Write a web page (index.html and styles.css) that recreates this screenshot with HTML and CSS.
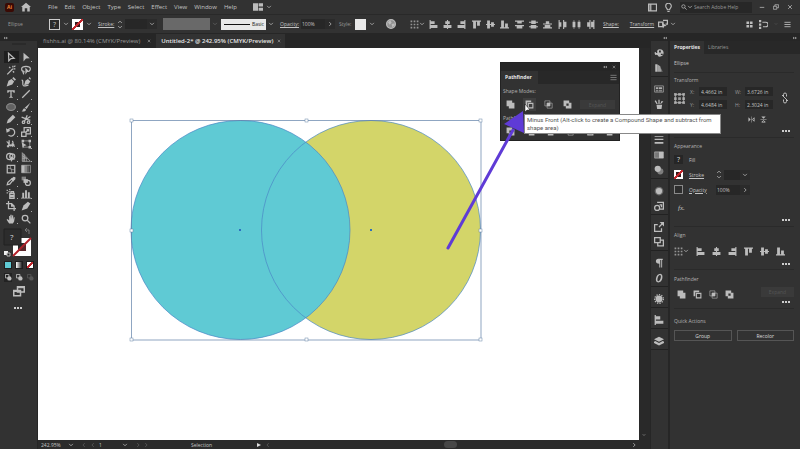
FILE: index.html
```
<!DOCTYPE html>
<html lang="en">

<head>
  <meta charset="UTF-8">
  <meta name="viewport" content="width=device-width, initial-scale=1.0">
  <title>Untitled-2 - Illustrator</title>
  <link rel="stylesheet" href="styles.css">
</head>

<body>
  <!-- icon sprite -->
  <svg class="sprite" aria-hidden="true">
    <symbol id="i-down" viewBox="0 0 16 16"><path class="line" d="M3 5l5 5 5-5"/></symbol>
    <symbol id="i-right" viewBox="0 0 16 16"><path class="line" d="M6 3l5 5-5 5"/></symbol>
    <symbol id="i-left" viewBox="0 0 16 16"><path class="line" d="M10 3L5 8l5 5"/></symbol>
    <symbol id="i-step" viewBox="0 0 16 24"><path class="line" d="M3 8l5-5 5 5M3 16l5 5 5-5"/></symbol>
    <symbol id="i-collapse" viewBox="0 0 16 16"><path d="M7 3v10L1 8zM15 3v10L9 8z"/></symbol>
    <symbol id="i-expand" viewBox="0 0 16 16"><path d="M1 3v10l6-5zM9 3v10l6-5z"/></symbol>
    <symbol id="i-x" viewBox="0 0 16 16"><path class="line" d="M3 3l10 10M13 3L3 13"/></symbol>
    <symbol id="i-min" viewBox="0 0 16 16"><path class="line" d="M2 9h12"/></symbol>
    <symbol id="i-restore" viewBox="0 0 16 16"><path class="line" d="M1 6h9v8H1zM5 6V2h10v8h-5"/></symbol>
    <symbol id="i-home" viewBox="0 0 16 16"><path d="M8 1L0 8h2v7h4v-5h4v5h4V8h2z"/></symbol>
    <symbol id="i-arrange" viewBox="0 0 16 16"><path d="M0 2h8v12H0zM9 2h7v5H9zM9 9h7v5H9z"/></symbol>
    <symbol id="i-frame" viewBox="0 0 16 16"><path class="line" d="M1 2h14v12H1zM5 2v12"/><path d="M1 2h4v12H1z" opacity=".5"/></symbol>
    <symbol id="i-bulb" viewBox="0 0 16 16"><path class="line" d="M6 12c0-3-3-3-3-6.500a5 5 0 0 1 10 0C13 9 10 9 10 12zM6 15h4"/></symbol>
    <symbol id="i-search" viewBox="0 0 16 16"><circle class="line" cx="6.500" cy="6.500" r="4.500"/><path class="line" d="M10 10l5 5"/></symbol>
    <symbol id="i-globe" viewBox="0 0 16 16"><circle cx="8" cy="8" r="7" opacity=".7"/><circle class="line" cx="8" cy="8" r="7"/><path d="M3 5l4-3 2 4-3 3zM9 8l4-1 1 3-4 3z"/></symbol>
    <symbol id="i-dots" viewBox="0 0 16 16"><path d="M1 1h3v3H1zM6.500 1h3v3h-3zM12 1h3v3h-3zM1 6.500h3v3H1zM6.500 6.500h3v3h-3zM12 6.500h3v3h-3zM1 12h3v3H1zM6.500 12h3v3h-3zM12 12h3v3h-3z" opacity=".7"/></symbol>
    <symbol id="i-al" viewBox="0 0 16 16"><path d="M1 0h2v16H1zM3 2h7v5H3zM3 9h12v5H3z"/></symbol>
    <symbol id="i-ac" viewBox="0 0 16 16"><path d="M7 0h2v16H7zM4 2h8v5H4zM1 9h14v5H1z"/></symbol>
    <symbol id="i-ar" viewBox="0 0 16 16"><path d="M13 0h2v16h-2zM6 2h7v5H6zM1 9h12v5H1z"/></symbol>
    <symbol id="i-at" viewBox="0 0 16 16"><path d="M0 1h16v2H0zM2 3h5v12H2zM9 3h5v7H9z"/></symbol>
    <symbol id="i-am" viewBox="0 0 16 16"><path d="M0 7h16v2H0zM2 1h5v14H2zM9 4h5v8H9z"/></symbol>
    <symbol id="i-ab" viewBox="0 0 16 16"><path d="M0 13h16v2H0zM2 1h5v12H2zM9 6h5v7H9z"/></symbol>
    <symbol id="i-dt" viewBox="0 0 16 16"><path d="M0 1h16v2H0zM4 3h8v3H4zM0 9h16v2H0zM3 11h10v4H3z"/></symbol>
    <symbol id="i-dm" viewBox="0 0 16 16"><path d="M0 3h16v2H0zM4 1h8v6H4zM0 11h16v2H0zM3 9h10v6H3z"/></symbol>
    <symbol id="i-db" viewBox="0 0 16 16"><path d="M0 6h16v2H0zM5 2h6v4H5zM0 13h16v2H0zM3 9h10v4H3z"/></symbol>
    <symbol id="i-dl" viewBox="0 0 16 16"><path d="M1 0h2v16H1zM3 4h3v8H3zM9 0h2v16H9zM11 3h4v10h-4z"/></symbol>
    <symbol id="i-dc" viewBox="0 0 16 16"><path d="M3 0h1v16H3zM1 3h5v10H1zM12 0h1v16h-1zM10 3h5v10h-5z"/></symbol>
    <symbol id="i-dr" viewBox="0 0 16 16"><path d="M6 0h2v16H6zM2 4h4v8H2zM13 0h2v16h-2zM9 3h4v10H9z"/></symbol>
    <symbol id="i-isolate" viewBox="0 0 16 16"><path class="line" d="M1 5h7v7H1zM8 2h7v6h-3"/><path d="M6 5l8 6-4 .5L8 15z"/></symbol>
    <symbol id="i-four" viewBox="0 0 16 16"><path d="M1 1h6v6H1zM9 1h6v6H9zM1 9h6v6H1zM9 9h6v6H9z"/></symbol>
    <symbol id="i-snap" viewBox="0 0 16 16"><path d="M0 0h4v4H0zM0 6h4v4H0zM0 12h4v4H0z"/><path class="line" d="M6 4h6a3 3 0 0 1 0 8H7"/></symbol>
    <symbol id="i-menu" viewBox="0 0 16 16"><path class="line" d="M1 3h14M1 8h14M1 13h14"/></symbol>

    <symbol id="t-select" viewBox="0 0 16 16"><path class="line" d="M4 2l9 8-5 .5L4.500 14z"/></symbol>
    <symbol id="t-direct" viewBox="0 0 16 16"><path d="M4 1l10 9-6 .5L4 15z"/></symbol>
    <symbol id="t-wand" viewBox="0 0 16 16"><path class="line" d="M2 15L11 6M11 1v3M15 6h-3M5 3l2 2M13 12l-2-2M15 1l-2 2"/></symbol>
    <symbol id="t-lasso" viewBox="0 0 16 16"><path class="line" d="M6 11C2 11 1 8 1 6c1-5 13-5 14 0 0 2-1 3-2 4M4 9c-3 2 1 4 0 6"/><path d="M7 4l7 7-4 0-3 4z"/></symbol>
    <symbol id="t-pen" viewBox="0 0 16 16"><path d="M1 15L4 6l5-3 4 4-3 5zM10 2l2-2 4 4-2 2z"/></symbol>
    <symbol id="t-curve" viewBox="0 0 16 16"><path d="M5 13l2-7 4-3 4 4-3 4zM12 2l2-2 2 3-1 1z"/><path class="line" d="M1 5c4 0 0 8 3 9s5-1 8-1"/></symbol>
    <symbol id="t-type" viewBox="0 0 16 16"><path d="M2 2h12v4h-2c0-2-1-2-3-2v8l2 1v1H5v-1l2-1V4C5 4 4 4 4 6H2z"/></symbol>
    <symbol id="t-line" viewBox="0 0 16 16"><path class="line" d="M2 14L14 2"/></symbol>
    <symbol id="t-ellipse" viewBox="0 0 16 16"><ellipse cx="8" cy="8" rx="7" ry="5.500" opacity=".35"/><ellipse class="line thin" cx="8" cy="8" rx="7" ry="5.500"/></symbol>
    <symbol id="t-brush" viewBox="0 0 16 16"><path d="M15 1L9 11 6 9zM5 10l3 2c0 3-4 4-7 3 2-1 2-4 4-5z"/></symbol>
    <symbol id="t-pencil" viewBox="0 0 16 16"><path d="M1 15l2-6 8-8 4 4-8 8z"/></symbol>
    <symbol id="t-cut" viewBox="0 0 16 16"><path class="line" d="M1 5l10 4M5 13l5-11M11 9l4 1M6 10l9-6"/><circle class="line" cx="4" cy="13" r="2"/><circle class="line" cx="12" cy="13" r="2"/></symbol>
    <symbol id="t-rotate" viewBox="0 0 16 16"><path class="line" d="M3 5a6 6 0 1 1 1 8"/><path d="M0 2l1 7 6-3z"/></symbol>
    <symbol id="t-scale" viewBox="0 0 16 16"><path class="line" d="M1 8h7v7H1zM5 8V1h10v10H8M8 8l4-4M9 4h3v3"/></symbol>
    <symbol id="t-width" viewBox="0 0 16 16"><path class="line" d="M1 4c4 1 3 8 7 7s4-6 2-8M2 13c3-4 8-5 12-1M5 2v6"/><path d="M1 11l4-3v6zM9 6l5 3-4 4z"/></symbol>
    <symbol id="t-free" viewBox="0 0 16 16"><path class="line thin" d="M3 3h11v10H3z"/><path d="M1 1h4v4H1zM12 1h4v4h-4zM12 11h4v4h-4zM1 5l8 5-4 1-2 4z"/></symbol>
    <symbol id="t-shape" viewBox="0 0 16 16"><circle class="line" cx="6" cy="7" r="5"/><circle class="line" cx="10" cy="7" r="4"/><path d="M7 6l8 6-4 0-3 4z"/></symbol>
    <symbol id="t-persp" viewBox="0 0 16 16"><path class="line thin" d="M2 1v14h13zM2 6l7 4v5M2 10h8M5 3v12"/><path d="M2 1l5 5v9H2z" opacity=".4"/></symbol>
    <symbol id="t-mesh" viewBox="0 0 16 16"><path class="line" d="M2 2h12v12H2z"/><path class="line thin" d="M2 8c4-4 8 4 12 0M8 2c-4 4 4 8 0 12"/></symbol>
    <symbol id="t-grad" viewBox="0 0 16 16"><path class="line thin" d="M1 2h14v12H1z"/><path d="M1 2h5v12H1z"/><path d="M6 2h4v12H6z" opacity=".6"/><path d="M10 2h3v12h-3z" opacity=".3"/></symbol>
    <symbol id="t-drop" viewBox="0 0 16 16"><path class="line" d="M2 14l1-4 6-5 2 2-5 6z"/><path d="M8 4l2-1 2-2 3 1 0 3-2 2-1 2z"/></symbol>
    <symbol id="t-blend" viewBox="0 0 16 16"><path d="M1 1h7v6H1z" opacity=".6"/><path d="M4 5h7v6H4z"/><circle class="line" cx="11" cy="11" r="4"/></symbol>
    <symbol id="t-spray" viewBox="0 0 16 16"><path class="line" d="M6 7h7v8H6zM8 7V4h4v3M8 10h3v2H8z"/><path d="M1 1h2v2H1zM4 3h2v2H4zM1 5h2v2H1zM5 0h2v2H5z"/></symbol>
    <symbol id="t-graph" viewBox="0 0 16 16"><path d="M2 6h3v8H2zM6.500 2h3v12h-3zM11 5h3v9h-3zM0 14h16v1H0z"/></symbol>
    <symbol id="t-artboard" viewBox="0 0 16 16"><path class="line" d="M4 0v12h12M0 4h9l4 4v8M9 4v4h4"/></symbol>
    <symbol id="t-slice" viewBox="0 0 16 16"><path d="M1 15l3-8 7-6 4 3-5 8z"/></symbol>
    <symbol id="t-hand" viewBox="0 0 16 16"><path d="M5 15L1 9l1-1 3 2V3h1.500v5l.5-7h2v7l1-6h1.500v7l1-4H14l-1 7-2 3z"/></symbol>
    <symbol id="t-edit" viewBox="0 0 16 16"><path class="line" d="M1 1h8v8H1z"/><circle cx="10" cy="10" r="5"/></symbol>
    <symbol id="t-screen" viewBox="0 0 16 16"><path class="line" d="M6 1h9v7H6zM1 6h9v7H1z"/><path d="M6 1h9v2H6zM1 6h9v2H1z"/></symbol>

    <symbol id="d-color" viewBox="0 0 16 16"><path fill-rule="evenodd" d="M9 2c9 0 8 12 0 12-3 0-2-3-4-3s-4 0-4-3c0-2 1-2 2-1 1 2 3 1 2-1 0-2 1-4 4-4zM8 4h3v3H8zM11 9h3v2h-3z"/></symbol>
    <symbol id="d-guide" viewBox="0 0 16 16"><path d="M2 2h3v12H2z"/><path d="M5 2l5 3 2 9H5z" opacity=".8"/><path d="M10 6l4 8h-2z" opacity=".5"/></symbol>
    <symbol id="d-swatch" viewBox="0 0 16 16"><path class="line thin" d="M1 3h14v10H1z"/><path d="M3 5h4v3H3zM8 5h5v3H8z" opacity=".9"/><path d="M3 9h4v3H3zM8 9h5v3H8z" opacity=".6"/></symbol>
    <symbol id="d-brush" viewBox="0 0 16 16"><path d="M4 9h9l-1 7H5zM7 1h2v7H7zM1 3l2-1 3 6H4zM12 3l3 1-4 4h-1z"/></symbol>
    <symbol id="d-club" viewBox="0 0 16 16"><path d="M8 1a3 3 0 0 1 3 5 3 3 0 1 1-2 5l1 4H6l1-4a3 3 0 1 1-2-5 3 3 0 0 1 3-5z"/></symbol>
    <symbol id="d-stroke" viewBox="0 0 16 16"><path d="M1 2h14v1H1zM1 6h14v2H1zM1 11h14v3H1z"/></symbol>
    <symbol id="d-grad" viewBox="0 0 16 16"><path class="line thin" d="M1 3h14v10H1z"/><path d="M1 3h7v10H1z" opacity=".5"/><path d="M8 3h7v10H8z"/></symbol>
    <symbol id="d-trans" viewBox="0 0 16 16"><circle cx="6" cy="6" r="5"/><circle cx="10" cy="10" r="5" opacity=".55"/></symbol>
    <symbol id="d-sun" viewBox="0 0 16 16"><circle cx="8" cy="8" r="5"/><circle cx="8" cy="8" r="7" opacity=".4"/></symbol>
    <symbol id="d-style" viewBox="0 0 16 16"><path class="line" d="M5 2h10v11H9M9 6h3v4"/><circle class="line" cx="5" cy="11" r="4"/></symbol>
    <symbol id="d-export" viewBox="0 0 16 16"><path class="line" d="M6 4H1v11h11v-5M8 8l6-6"/><path d="M9 0h7v7z"/></symbol>
    <symbol id="d-layers2" viewBox="0 0 16 16"><path class="line" d="M1 1h9v8H1zM10 5h5v9H6V9"/></symbol>
    <symbol id="d-para" viewBox="0 0 16 16"><path d="M7 1h7v2h-1v12h-1.500V3H10v12H8.500V9C1 9 2 1 7 1z"/></symbol>
    <symbol id="d-o" viewBox="0 0 16 16"><path fill-rule="evenodd" d="M10 1c6 0 4 14-3 14C0 15 3 1 10 1zM9.500 3C6 3 4 13 7 13s6-10 2.500-10z"/></symbol>
    <symbol id="d-wheel" viewBox="0 0 16 16"><circle cx="8" cy="8" r="5.500"/><circle class="line dash" cx="8" cy="8" r="7"/></symbol>
    <symbol id="d-stack" viewBox="0 0 16 16"><path d="M8 1l8 4-8 4-8-4zM0 9l2-1 6 3 6-3 2 1v2l-8 4-8-4z"/></symbol>

    <symbol id="p-unite" viewBox="0 0 16 16"><path d="M1 1h10v4h4v10H5v-4H1z"/></symbol>
    <symbol id="p-minus" viewBox="0 0 16 16"><path d="M1 1h10v3H4v7H1z"/><path class="line" d="M6 6h8v8H6z"/></symbol>
    <symbol id="p-inter" viewBox="0 0 16 16"><path class="line thin" d="M1.500 1.500h9v9h-9zM5.500 5.500h9v9h-9z"/><path d="M5 5h6v6H5z"/></symbol>
    <symbol id="p-excl" viewBox="0 0 16 16"><path fill-rule="evenodd" d="M1 1h10v4h4v10H5v-4H1zM6 6v4h4V6z"/></symbol>
    <symbol id="p-flat" viewBox="0 0 16 16"><path class="line" d="M2 2h9v9H2zM5 5h9v9H5z"/></symbol>
    <symbol id="p-flipx" viewBox="0 0 16 16"><path d="M1 3v10l5-5zM7.500 1h1v14h-1z"/><path class="line" d="M14 4v8l-4-4z"/></symbol>
    <symbol id="p-flipy" viewBox="0 0 16 16"><path d="M3 1h10L8 6zM1 7.500h14v1H1z"/><path class="line" d="M4 14h8l-4-4z"/></symbol>
    <symbol id="p-link" viewBox="0 0 16 24"><path class="line" d="M5 9V5a3 3 0 0 1 6 0v4M5 15v4a3 3 0 0 0 6 0v-4M2 6l12 12"/></symbol>
    <symbol id="p-ref" viewBox="0 0 16 16"><path class="line thin" d="M2 2h12v12H2z"/><path d="M0 0h4v4H0zM6 0h4v4H6zM12 0h4v4h-4zM0 6h4v4H0zM6 6h4v4H6zM12 6h4v4h-4zM0 12h4v4H0zM6 12h4v4H6zM12 12h4v4h-4z" opacity=".75"/></symbol>
  </svg>

  <header class="menubar">
    <span class="logo">Ai</span>
    <button class="home" aria-label="Home"><svg class="icon"><use href="#i-home"/></svg></button>
    <nav class="menus">
      <a href="#">File</a>
      <a href="#">Edit</a>
      <a href="#">Object</a>
      <a href="#">Type</a>
      <a href="#">Select</a>
      <a href="#">Effect</a>
      <a href="#">View</a>
      <a href="#">Window</a>
      <a href="#">Help</a>
    </nav>
    <button class="arrange" aria-label="Arrange documents">
      <svg class="icon"><use href="#i-arrange"/></svg>
      <svg class="chev"><use href="#i-down"/></svg>
    </button>
    <div class="menubar-right">
      <button aria-label="Workspace"><svg class="icon small"><use href="#i-frame"/></svg></button>
      <button aria-label="Learn"><svg class="icon small"><use href="#i-bulb"/></svg></button>
      <div class="search">
        <svg class="chev"><use href="#i-search"/></svg>
        <svg class="chev"><use href="#i-down"/></svg>
        <input type="text" aria-label="Search" placeholder="Search Adobe Help">
      </div>
      <div class="window-buttons">
        <button aria-label="Minimize"><svg class="chev"><use href="#i-min"/></svg></button>
        <button aria-label="Restore"><svg class="chev"><use href="#i-restore"/></svg></button>
        <button aria-label="Close"><svg class="chev"><use href="#i-x"/></svg></button>
      </div>
    </div>
  </header>

  <div class="controlbar">
    <span class="object-type">Ellipse</span>
    <button class="picker" aria-label="Fill"><span class="swatch unknown">?</span><svg class="chev"><use href="#i-down"/></svg></button>
    <button class="picker" aria-label="Stroke color"><span class="swatch none"></span><svg class="chev"><use href="#i-down"/></svg></button>
    <label class="under stroke-label" for="strokeWeight">Stroke:</label>
    <svg class="stepper"><use href="#i-step"/></svg>
    <input class="field weight" id="strokeWeight" type="text">
    <button class="drop" aria-label="Stroke weights"><svg class="chev"><use href="#i-down"/></svg></button>
    <button class="profile" aria-label="Width profile"><span class="profile-box"></span><svg class="chev dim"><use href="#i-down"/></svg></button>
    <button class="brush"><span class="brush-box"><span class="brush-line"></span>Basic</span><svg class="chev"><use href="#i-down"/></svg></button>
    <label class="under opacity-label" for="opacity">Opacity:</label>
    <input class="field percent" id="opacity" type="text" value="100%">
    <button class="drop" aria-label="Opacity slider"><svg class="chev"><use href="#i-right"/></svg></button>
    <span class="style-label">Style:</span>
    <button class="picker" aria-label="Graphic style"><span class="swatch white"></span><svg class="chev"><use href="#i-down"/></svg></button>
    <button class="recolor" aria-label="Recolor artwork"><svg class="icon"><use href="#i-globe"/></svg></button>
    <button class="align-to" aria-label="Align to"><svg class="icon small"><use href="#i-dots"/></svg><svg class="chev"><use href="#i-down"/></svg></button>
    <div class="align-buttons">
      <button aria-label="Align left"><svg class="icon small"><use href="#i-al"/></svg></button>
      <button aria-label="Align center"><svg class="icon small"><use href="#i-ac"/></svg></button>
      <button aria-label="Align right"><svg class="icon small"><use href="#i-ar"/></svg></button>
    </div>
    <div class="align-buttons">
      <button aria-label="Align top"><svg class="icon small"><use href="#i-at"/></svg></button>
      <button aria-label="Align middle"><svg class="icon small"><use href="#i-am"/></svg></button>
      <button aria-label="Align bottom"><svg class="icon small"><use href="#i-ab"/></svg></button>
    </div>
    <div class="align-buttons">
      <button aria-label="Distribute top"><svg class="icon small"><use href="#i-dt"/></svg></button>
      <button aria-label="Distribute middle"><svg class="icon small"><use href="#i-dm"/></svg></button>
      <button aria-label="Distribute bottom"><svg class="icon small"><use href="#i-db"/></svg></button>
    </div>
    <div class="align-buttons">
      <button aria-label="Distribute left"><svg class="icon small"><use href="#i-dl"/></svg></button>
      <button aria-label="Distribute center"><svg class="icon small"><use href="#i-dc"/></svg></button>
      <button aria-label="Distribute right"><svg class="icon small"><use href="#i-dr"/></svg></button>
    </div>
    <a class="under shape-link" href="#">Shape:</a>
    <a class="under transform-link" href="#">Transform</a>
    <button class="isolate" aria-label="Isolate"><svg class="icon"><use href="#i-isolate"/></svg><svg class="chev"><use href="#i-down"/></svg></button>
    <div class="controlbar-right">
      <button aria-label="Grid"><svg class="icon tiny"><use href="#i-four"/></svg></button>
      <button aria-label="Snap"><svg class="icon small"><use href="#i-snap"/></svg></button>
      <svg class="chev dim"><use href="#i-down"/></svg>
      <button class="bar-menu" aria-label="Menu"><svg class="icon tiny"><use href="#i-menu"/></svg></button>
    </div>
  </div>

  <div class="workspace">
    <aside class="tools">
      <div class="strip"><svg class="arrows"><use href="#i-expand"/></svg></div>
      <div class="grip"></div>
      <div class="tool-grid">
        <button class="active" aria-label="Selection"><svg class="icon"><use href="#t-select"/></svg></button>
        <button class="more" aria-label="Direct selection"><svg class="icon"><use href="#t-direct"/></svg></button>
        <button aria-label="Magic wand"><svg class="icon"><use href="#t-wand"/></svg></button>
        <button aria-label="Lasso"><svg class="icon"><use href="#t-lasso"/></svg></button>
        <button class="more" aria-label="Pen"><svg class="icon"><use href="#t-pen"/></svg></button>
        <button aria-label="Curvature"><svg class="icon"><use href="#t-curve"/></svg></button>
        <button class="more" aria-label="Type"><svg class="icon"><use href="#t-type"/></svg></button>
        <button class="more" aria-label="Line"><svg class="icon"><use href="#t-line"/></svg></button>
        <button class="more" aria-label="Ellipse"><svg class="icon"><use href="#t-ellipse"/></svg></button>
        <button class="more" aria-label="Paintbrush"><svg class="icon"><use href="#t-brush"/></svg></button>
        <button class="more" aria-label="Pencil"><svg class="icon"><use href="#t-pencil"/></svg></button>
        <button class="more" aria-label="Scissors"><svg class="icon"><use href="#t-cut"/></svg></button>
        <button class="more" aria-label="Rotate"><svg class="icon"><use href="#t-rotate"/></svg></button>
        <button class="more" aria-label="Scale"><svg class="icon"><use href="#t-scale"/></svg></button>
        <button class="more" aria-label="Width"><svg class="icon"><use href="#t-width"/></svg></button>
        <button class="more" aria-label="Free transform"><svg class="icon"><use href="#t-free"/></svg></button>
        <button class="more" aria-label="Shape builder"><svg class="icon"><use href="#t-shape"/></svg></button>
        <button class="more" aria-label="Perspective grid"><svg class="icon"><use href="#t-persp"/></svg></button>
        <button aria-label="Mesh"><svg class="icon"><use href="#t-mesh"/></svg></button>
        <button aria-label="Gradient"><svg class="icon"><use href="#t-grad"/></svg></button>
        <button class="more" aria-label="Eyedropper"><svg class="icon"><use href="#t-drop"/></svg></button>
        <button aria-label="Blend"><svg class="icon"><use href="#t-blend"/></svg></button>
        <button class="more" aria-label="Symbol sprayer"><svg class="icon"><use href="#t-spray"/></svg></button>
        <button class="more" aria-label="Graph"><svg class="icon"><use href="#t-graph"/></svg></button>
        <button aria-label="Artboard"><svg class="icon"><use href="#t-artboard"/></svg></button>
        <button class="more" aria-label="Slice"><svg class="icon"><use href="#t-slice"/></svg></button>
        <button class="more" aria-label="Hand"><svg class="icon"><use href="#t-hand"/></svg></button>
        <button aria-label="Zoom"><svg class="icon"><use href="#i-search"/></svg></button>
      </div>
      <svg class="fill-stroke" viewBox="0 0 38 34">
        <path d="M13 13h18v18H13z" fill="#fff"/>
        <path d="M18 18h8v8h-8z" fill="#2b2b2b"/>
        <path d="M13 31L31 13" stroke="#b5222b" stroke-width="2"/>
        <path d="M4 4h17v16H4z" fill="#2c2c2c" stroke="#202020"/>
        <path d="M17 27L26 18v8h-7z" fill="#8e2229" opacity=".5"/>
        <text x="10" y="15">?</text>
        <path d="M25 5h4v4M27 3l-2 2 2 2" fill="none" stroke="#777"/>
        <path d="M4 26h4v4H4z" fill="#eee"/>
        <path d="M7 28h3v3H7z" fill="#222" stroke="#bbb"/>
      </svg>
      <div class="color-modes">
        <button class="mode teal" aria-label="Color"></button>
        <button class="mode fade" aria-label="Gradient"></button>
        <button class="mode slash" aria-label="None"></button>
      </div>
      <div class="draw-modes">
        <button class="active" aria-label="Draw normal"><svg class="icon tiny"><use href="#t-edit"/></svg></button>
        <button aria-label="Draw behind"><svg class="icon tiny"><use href="#t-edit"/></svg></button>
        <button class="off" aria-label="Draw inside"><svg class="icon tiny"><use href="#t-edit"/></svg></button>
      </div>
      <button class="screen-mode" aria-label="Screen mode"><svg class="icon"><use href="#t-screen"/></svg></button>
      <button class="dots tool-dots" aria-label="Edit toolbar"></button>
    </aside>

    <main class="document">
      <div class="tabs">
        <a class="tab" href="#">fishhs.ai @ 80.14% (CMYK/Preview) <svg class="close"><use href="#i-x"/></svg></a>
        <a class="tab current" href="#">Untitled-2* @ 242.95% (CMYK/Preview) <svg class="close"><use href="#i-x"/></svg></a>
      </div>
      <div class="stage">
        <div class="canvas">
          <svg class="artwork">
            <circle cx="333" cy="182" r="109.500" fill="#d3d569"/>
            <circle cx="202.500" cy="182" r="109.500" fill="#5fcad4"/>
            <g class="selection">
              <circle cx="333" cy="182" r="109.500"/>
              <circle cx="202.500" cy="182" r="109.500"/>
              <path class="bounds" d="M93.500 72.500h349.500v219.500h-349.500z"/>
            </g>
            <g class="handles">
              <rect x="92" y="71" width="3" height="3"/>
              <rect x="267" y="71" width="3" height="3"/>
              <rect x="441" y="71" width="3" height="3"/>
              <rect x="92" y="181" width="3" height="3"/>
              <rect x="441" y="181" width="3" height="3"/>
              <rect x="92" y="290" width="3" height="3"/>
              <rect x="267" y="290" width="3" height="3"/>
              <rect x="441" y="290" width="3" height="3"/>
            </g>
            <path class="centers" d="M201 181h2v2h-2zM332 181h2v2h-2z"/>
          </svg>
        </div>
        <div class="vscroll"><svg class="arrows"><use href="#i-down"/></svg></div>
      </div>
      <footer class="status">
        <select class="zoom-level" aria-label="Zoom">
          <option>242.95%</option>
        </select>
        <svg class="chev"><use href="#i-down"/></svg>
        <div class="artboard-nav">
          <svg class="chev dim"><use href="#i-left"/></svg>
          <svg class="chev dim"><use href="#i-left"/></svg>
          <select class="artboard" aria-label="Artboard">
            <option>1</option>
          </select>
          <svg class="chev"><use href="#i-down"/></svg>
        </div>
        <svg class="chev dim"><use href="#i-right"/></svg>
        <svg class="chev dim"><use href="#i-right"/></svg>
        <span class="tool-name">Selection</span>
        <span class="play"></span>
        <svg class="chev dim"><use href="#i-left"/></svg>
        <div class="hscroll"><span class="thumb"></span></div>
        <svg class="chev"><use href="#i-right"/></svg>
      </footer>
    </main>

    <nav class="dock">
      <div class="strip"><svg class="arrows"><use href="#i-collapse"/></svg></div>
      <div class="dock-group">
        <button aria-label="Color"><svg class="icon"><use href="#d-color"/></svg></button>
        <button aria-label="Color guide"><svg class="icon"><use href="#d-guide"/></svg></button>
      </div>
      <div class="dock-group">
        <button aria-label="Swatches"><svg class="icon"><use href="#d-swatch"/></svg></button>
        <button aria-label="Brushes"><svg class="icon"><use href="#d-brush"/></svg></button>
        <button aria-label="Symbols"><svg class="icon"><use href="#d-club"/></svg></button>
      </div>
      <div class="dock-group">
        <button aria-label="Stroke"><svg class="icon"><use href="#d-stroke"/></svg></button>
        <button aria-label="Gradient"><svg class="icon"><use href="#d-grad"/></svg></button>
        <button aria-label="Transparency"><svg class="icon"><use href="#d-trans"/></svg></button>
      </div>
      <div class="dock-group">
        <button aria-label="Appearance"><svg class="icon"><use href="#d-sun"/></svg></button>
        <button aria-label="Graphic styles"><svg class="icon"><use href="#d-style"/></svg></button>
      </div>
      <div class="dock-group">
        <button aria-label="Asset export"><svg class="icon"><use href="#d-export"/></svg></button>
        <button aria-label="Artboards"><svg class="icon"><use href="#d-layers2"/></svg></button>
      </div>
      <div class="dock-group">
        <button aria-label="Paragraph"><svg class="icon"><use href="#d-para"/></svg></button>
        <button aria-label="OpenType"><svg class="icon"><use href="#d-o"/></svg></button>
      </div>
      <div class="dock-group">
        <button aria-label="Color themes"><svg class="icon"><use href="#d-wheel"/></svg></button>
      </div>
      <div class="dock-group">
        <button aria-label="Align"><svg class="icon"><use href="#i-al"/></svg></button>
      </div>
      <div class="dock-group">
        <button aria-label="Layers"><svg class="icon"><use href="#d-stack"/></svg></button>
      </div>
    </nav>

    <aside class="panels">
      <div class="strip right"><svg class="arrows"><use href="#i-expand"/></svg></div>
      <div class="panel-tabs">
        <a class="current" href="#">Properties</a>
        <a href="#">Libraries</a>
      </div>
      <section class="selected-type">Ellipse</section>
      <section class="transform">
        <h2>Transform</h2>
        <div class="transform-grid">
          <svg class="icon ref"><use href="#p-ref"/></svg>
          <label for="x">X:</label><input class="field" id="x" type="text" value="4.4662 in">
          <label for="w">W:</label><input class="field" id="w" type="text" value="3.6726 in">
          <svg class="link"><use href="#p-link"/></svg>
          <label for="y">Y:</label><input class="field" id="y" type="text" value="4.6484 in">
          <label for="h">H:</label><input class="field" id="h" type="text" value="2.3024 in">
        </div>
        <div class="flip">
          <button aria-label="Flip horizontal"><svg class="icon tiny"><use href="#p-flipx"/></svg></button>
          <button aria-label="Flip vertical"><svg class="icon tiny"><use href="#p-flipy"/></svg></button>
        </div>
        <button class="dots" aria-label="More transform"></button>
      </section>
      <section class="appearance">
        <h2>Appearance</h2>
        <div class="row"><button class="swatch dark" aria-label="Fill color">?</button><span class="name">Fill</span></div>
        <div class="row">
          <button class="swatch none" aria-label="Stroke swatch"></button>
          <label class="name under" for="panelStroke">Stroke</label>
          <svg class="stepper"><use href="#i-step"/></svg>
          <input class="field weight" id="panelStroke" type="text">
          <button class="drop" aria-label="Stroke weights"><svg class="chev"><use href="#i-down"/></svg></button>
        </div>
        <div class="row">
          <button class="swatch empty" aria-label="Opacity swatch"></button>
          <label class="name under" for="panelOpacity">Opacity</label>
          <input class="field percent" id="panelOpacity" type="text" value="100%">
          <button class="drop" aria-label="Opacity slider"><svg class="chev"><use href="#i-right"/></svg></button>
        </div>
        <button class="fx">fx.</button>
        <button class="dots" aria-label="More appearance"></button>
      </section>
      <section class="align">
        <h2>Align</h2>
        <div class="icon-row">
          <button class="align-to" aria-label="Align to"><svg class="icon small"><use href="#i-dots"/></svg><svg class="chev"><use href="#i-down"/></svg></button>
          <button aria-label="Align left"><svg class="icon small"><use href="#i-al"/></svg></button>
          <button aria-label="Align center"><svg class="icon small"><use href="#i-ac"/></svg></button>
          <button aria-label="Align right"><svg class="icon small"><use href="#i-ar"/></svg></button>
          <button aria-label="Align top"><svg class="icon small"><use href="#i-at"/></svg></button>
          <button aria-label="Align middle"><svg class="icon small"><use href="#i-am"/></svg></button>
          <button aria-label="Align bottom"><svg class="icon small"><use href="#i-ab"/></svg></button>
        </div>
        <button class="dots" aria-label="More align"></button>
      </section>
      <section class="pathfinder">
        <h2>Pathfinder</h2>
        <div class="icon-row">
          <button aria-label="Unite"><svg class="icon small"><use href="#p-unite"/></svg></button>
          <button aria-label="Minus front"><svg class="icon small"><use href="#p-minus"/></svg></button>
          <button aria-label="Intersect"><svg class="icon small"><use href="#p-inter"/></svg></button>
          <button aria-label="Exclude"><svg class="icon small"><use href="#p-excl"/></svg></button>
          <button class="expand" disabled>Expand</button>
        </div>
        <button class="dots" aria-label="More pathfinder"></button>
      </section>
      <section class="quick">
        <h2>Quick Actions</h2>
        <div class="quick-buttons">
          <button>Group</button>
          <button>Recolor</button>
        </div>
      </section>
    </aside>
  </div>

  <!-- floating Pathfinder panel -->
  <div class="floating">
    <div class="floating-top">
      <svg class="arrows"><use href="#i-collapse"/></svg>
      <svg class="arrows"><use href="#i-x"/></svg>
    </div>
    <div class="floating-tabs">
      <a href="#">Pathfinder</a>
      <svg class="icon tiny"><use href="#i-menu"/></svg>
    </div>
    <h3>Shape Modes:</h3>
    <div class="modes">
      <button aria-label="Unite"><svg class="icon small"><use href="#p-unite"/></svg></button>
      <button class="hover" aria-label="Minus front"><svg class="icon small"><use href="#p-minus"/></svg></button>
      <button aria-label="Intersect"><svg class="icon small"><use href="#p-inter"/></svg></button>
      <button aria-label="Exclude"><svg class="icon small"><use href="#p-excl"/></svg></button>
      <button class="expand" disabled>Expand</button>
    </div>
    <h3>Pathf</h3>
    <div class="finders">
      <button aria-label="Divide"><svg class="icon small"><use href="#p-excl"/></svg></button>
      <button aria-label="Trim"><svg class="icon small"><use href="#p-unite"/></svg></button>
      <button aria-label="Merge"><svg class="icon small"><use href="#p-unite"/></svg></button>
      <button aria-label="Crop"><svg class="icon small"><use href="#p-inter"/></svg></button>
      <button aria-label="Outline"><svg class="icon small"><use href="#p-flat"/></svg></button>
      <button aria-label="Minus back"><svg class="icon small"><use href="#p-unite"/></svg></button>
    </div>
  </div>
  <div class="tooltip" role="tooltip">Minus Front (Alt-click to create a Compound Shape and subtract from shape area)</div>
  <svg class="pointer" viewBox="0 0 84 152">
    <path d="M3 148L68 30" fill="none" stroke="#5f3bd6" stroke-width="3" stroke-linecap="round"/>
    <path d="M78 11L79 33 59 24z" fill="#5f3bd6"/>
    <path d="M80 4v8l2-2 3 0z" fill="#fff" stroke="#111" stroke-width=".5"/>
  </svg>
</body>

</html>
```
FILE: styles.css
```
* {
  box-sizing: border-box;
}

body {
  margin: 0;
  height: 100vh;
  display: flex;
  flex-direction: column;
  overflow: hidden;
  position: relative;
  background: #323232;
  color: #c4c4c4;
  font: 6px/8px "Open Sans", "Noto Sans", sans-serif;
}

button,
input,
select {
  margin: 0;
  padding: 0;
  border: 0;
  border-radius: 0;
  background: none;
  color: inherit;
  font: inherit;
  appearance: none;
}

button {
  display: flex;
  align-items: center;
  justify-content: center;
}

a {
  color: inherit;
  text-decoration: none;
}

h2,
h3 {
  margin: 0;
  font-size: 5px;
  font-weight: normal;
  line-height: 8px;
  color: #b4b4b4;
}

svg {
  flex: none;
  fill: #bcbcbc;
}

.sprite {
  position: absolute;
  width: 0;
  height: 0;
}

.line {
  fill: none;
  stroke: #bcbcbc;
  stroke-width: 2;
}

.thin {
  stroke-width: 1;
}

.dash {
  stroke-dasharray: 2 2;
}

.icon {
  width: 10px;
  height: 10px;
}

.icon.small {
  width: 9px;
  height: 9px;
}

.icon.tiny {
  width: 7px;
  height: 7px;
}

.chev {
  width: 6px;
  height: 6px;
}

.arrows {
  width: 4px;
  height: 4px;
}

.dim {
  opacity: 0.35;
}

.under {
  text-decoration: underline;
  text-underline-offset: 1px;
}

/* menu bar */
.menubar {
  flex: none;
  height: 15px;
  display: flex;
  align-items: center;
  padding: 0 7px 0 5px;
  border-bottom: 1px solid #292929;
}

.logo {
  width: 9px;
  height: 9px;
  border-radius: 2px;
  background: #3a0a04;
  color: #f08a3c;
  font-size: 5px;
  font-weight: bold;
  line-height: 9px;
  text-align: center;
}

.home {
  margin: 0 17px 0 7px;
}

.menus {
  display: flex;
  gap: 7px;
}

.arrange {
  gap: 3px;
  margin-left: 16px;
}

.menubar-right {
  display: flex;
  align-items: center;
  gap: 7px;
  margin-left: auto;
}

.search {
  display: flex;
  align-items: center;
  width: 72px;
  height: 11px;
  padding-left: 1px;
  background: #272727;
}

.search input {
  width: 58px;
  padding-left: 1px;
  font-size: 5px;
}

.search input::placeholder {
  color: #999;
}

.window-buttons {
  display: flex;
  gap: 8px;
}

/* control bar */
.controlbar {
  flex: none;
  height: 19px;
  display: flex;
  align-items: center;
  border-bottom: 1px solid #262626;
  font-size: 5px;
}

.object-type {
  width: 49px;
  padding-left: 8px;
  color: #999;
}

.picker {
  gap: 3px;
  margin-right: 3px;
}

.swatch {
  width: 11px;
  height: 11px;
  text-align: center;
  font-size: 7px;
  line-height: 9px;
}

.unknown {
  border: 1px solid #ccc;
  background: #2a2a2a;
}

.none {
  background: linear-gradient(135deg, transparent 44%, #c1272d 44%, #c1272d 56%, transparent 56%), linear-gradient(#3a1a1c, #3a1a1c) center / 5px 5px no-repeat, #fff;
}

.white {
  background: #e8e8e8;
}

.stroke-label {
  width: 22px;
  padding-left: 3px;
}

.stepper {
  width: 6px;
  height: 9px;
}

.field {
  height: 10px;
  background: #272727;
  font-size: 5px;
}

.weight {
  width: 22px;
  margin-left: 2px;
}

.drop {
  width: 10px;
  height: 10px;
  background: #2b2b2b;
}

.profile,
.brush {
  gap: 2px;
}

.profile {
  margin: 0 3px 0 6px;
}

.profile-box {
  width: 47px;
  height: 12px;
  background: #696969;
}

.brush-box {
  display: flex;
  align-items: center;
  justify-content: flex-end;
  gap: 2px;
  width: 45px;
  height: 11px;
  padding-right: 2px;
  background: #e8e8e8;
  color: #222;
}

.brush-line {
  width: 26px;
  height: 1px;
  background: #111;
}

.opacity-label {
  width: 27px;
  padding-left: 6px;
}

.percent {
  width: 24px;
  padding-left: 1px;
}

.style-label {
  width: 20px;
  padding-left: 4px;
  color: #999;
}

.recolor {
  margin-left: 8px;
}

.controlbar .align-to {
  margin: 0 1px 0 14px;
}

.align-buttons {
  display: flex;
  margin-right: 1px;
}

.align-buttons button {
  width: 14px;
}

.shape-link {
  margin-left: 5px;
}

.transform-link {
  margin: 0 4px 0 11px;
}

.isolate {
  gap: 2px;
}

.controlbar-right {
  display: flex;
  align-items: center;
  gap: 6px;
  margin-left: auto;
  padding-right: 9px;
}

.controlbar-right .chev {
  width: 4px;
}

/* workspace */
.workspace {
  flex: 1;
  min-height: 0;
  display: flex;
}

.strip {
  flex: none;
  height: 7px;
  display: flex;
  align-items: center;
  padding-left: 4px;
  background: #262626;
}

.strip.right {
  justify-content: flex-end;
  padding-right: 3px;
}

/* tools */
.tools {
  flex: none;
  width: 38px;
  display: flex;
  flex-direction: column;
  border-right: 1px solid #262626;
}

.grip {
  width: 14px;
  height: 2px;
  margin: 2px auto 6px;
  background: #2a2a2a;
}

.tool-grid {
  display: grid;
  grid-template-columns: 1fr 1fr;
  grid-auto-rows: 1fr;
  height: 174px;
  padding: 0 4px;
}

.tool-grid button {
  position: relative;
}

.tool-grid .active {
  background: #1f1f1f;
}

.more::after {
  content: "";
  position: absolute;
  right: 1px;
  bottom: 1px;
  width: 1px;
  height: 1px;
  background: #aaa;
}

.fill-stroke {
  width: 38px;
  height: 34px;
  fill: #ddd;
  font-size: 8px;
}

.color-modes,
.draw-modes {
  display: flex;
  gap: 3px;
  padding-left: 4px;
}

.mode {
  width: 8px;
  height: 8px;
  border: 1px solid #1e1e1e;
}

.color-modes {
  margin-top: 2px;
}

.teal {
  background: #5fcad4;
}

.fade {
  background: linear-gradient(90deg, #fff, #222);
}

.slash {
  background: linear-gradient(135deg, #fff 38%, #c1272d 38%, #c1272d 62%, #fff 62%);
}

.draw-modes {
  margin-top: 4px;
}

.draw-modes button {
  width: 8px;
  height: 9px;
}

.draw-modes .active {
  background: #222;
}

.off {
  opacity: 0.25;
}

.screen-mode {
  margin-top: 4px;
}

.screen-mode .icon {
  width: 12px;
  height: 12px;
}

.dots {
  width: 9px;
  height: 2px;
  background: linear-gradient(90deg, #ccc 2px, transparent 2px) 0 0 / 3px 2px;
}

.tool-dots {
  margin: 9px auto 0;
}

/* document */
.document {
  flex: 1;
  min-width: 0;
  display: flex;
  flex-direction: column;
}

.tabs {
  flex: none;
  height: 14px;
  display: flex;
  background: #262626;
}

.tab {
  display: flex;
  align-items: center;
  gap: 7px;
  padding: 0 5px;
  color: #999;
}

.tab.current {
  padding-right: 4px;
  gap: 4px;
  background: #323232;
  color: #e6e6e6;
  font-weight: 600;
}

.close {
  width: 4px;
  height: 4px;
}

.stage {
  flex: 1;
  min-height: 0;
  display: flex;
}

.canvas {
  flex: 1;
  background: #fff;
}

.artwork {
  display: block;
  width: 100%;
  height: 100%;
}

.selection {
  fill: none;
  stroke: #4a86c5;
  stroke-width: 0.7;
}

.bounds {
  stroke: #5f80a8;
}

.handles {
  fill: #fff;
  stroke: #6a86a8;
  stroke-width: 0.5;
}

.centers {
  fill: #2d6fc0;
}

.vscroll {
  flex: none;
  width: 11px;
  display: flex;
  align-items: flex-end;
  padding: 0 0 3px 3px;
  background: #292929;
}

.status {
  flex: none;
  height: 9px;
  display: flex;
  align-items: center;
  gap: 2px;
  padding: 0 13px 0 3px;
  background: #2b2b2b;
  font-size: 5px;
}

.zoom-level {
  width: 25px;
}

.artboard-nav {
  display: flex;
  align-items: center;
  gap: 3px;
  margin: 0 5px 0 5px;
}

.artboard {
  width: 20px;
}

.tool-name {
  margin: 0 43px 0 40px;
}

.play {
  border: 2px solid transparent;
  border-left: 4px solid #ddd;
}

.hscroll {
  flex: 1;
}

.thumb {
  display: block;
  width: 13px;
  height: 7px;
  margin-left: 48%;
  border-radius: 4px;
  background: #474747;
}

/* dock */
.dock {
  flex: none;
  width: 20px;
  border: 1px solid #262626;
  border-width: 0 2px 0 1px;
}

.dock .strip {
  padding-left: 12px;
}

.dock-group {
  padding: 4px 0 1px;
  border-bottom: 1px solid #222;
}

.dock-group button {
  width: 15px;
  height: 15px;
}

/* properties */
.panels {
  flex: none;
  width: 130px;
  font-size: 5px;
}

.panel-tabs {
  display: flex;
  height: 13px;
  line-height: 13px;
  background: #282828;
  color: #999;
}

.panel-tabs a {
  padding: 0 4px;
}

.panel-tabs .current {
  background: #323232;
  color: #e6e6e6;
  font-weight: bold;
}

.panels section {
  margin: 0 6px 0 4px;
  border-bottom: 1px solid #2a2a2a;
}

.panels .dots {
  margin-left: auto;
  margin-right: 3px;
}

.panels .selected-type {
  padding: 5px 0;
}

.transform {
  padding: 3px 0 5px;
}

.transform-grid {
  display: grid;
  grid-template-columns: 15px 10px 28px 18px 28px 1fr;
  align-items: center;
  row-gap: 4px;
  margin-top: 3px;
}

.transform-grid .field {
  width: 28px;
  height: 9px;
  padding-left: 2px;
}

.transform-grid label {
  padding-left: 1px;
  color: #999;
}

.transform-grid label[for="w"],
.transform-grid label[for="h"] {
  padding-left: 8px;
}

.ref,
.link {
  grid-row: 1 / 3;
}

.ref {
  grid-column: 1;
  width: 11px;
  height: 11px;
}

.link {
  grid-column: 6;
  justify-self: end;
  width: 8px;
  height: 12px;
  margin-right: 5px;
}

.flip {
  display: flex;
  justify-content: flex-end;
  gap: 5px;
  margin: 7px 27px 7px 0;
}

.appearance {
  padding: 4px 0 5px;
}

.appearance h2 {
  margin-bottom: 2px;
}

.row {
  display: flex;
  align-items: center;
  height: 15px;
}

.row .swatch {
  width: 9px;
  height: 9px;
}

.dark {
  background: #262626;
  color: #ddd;
}

.empty {
  border: 1px solid #8a8a8a;
  background: #2d2d2d;
}

.name {
  width: 27px;
  margin-left: 6px;
}

.row .weight {
  width: 16px;
}

.fx {
  margin: 7px 0 7px 4px;
  font: italic 7px/8px "Liberation Serif", serif;
}

.align {
  padding: 4px 0 4px;
}

.icon-row {
  display: flex;
  align-items: center;
  gap: 7px;
  height: 16px;
  margin-top: 4px;
}

.align-to {
  gap: 0;
}

.align .dots {
  margin-top: 4px;
}

.pathfinder {
  padding: 5px 0 5px;
}

.pathfinder .icon-row {
  height: 14px;
  padding-left: 3px;
}

.expand {
  width: 33px;
  height: 10px;
  margin-left: auto;
  background: #3a3a3a;
  color: #555;
}

.panels .expand {
  align-self: flex-start;
}

.panels .quick {
  padding-top: 8px;
  border-bottom: 0;
}

.quick-buttons {
  display: flex;
  gap: 5px;
  margin-top: 5px;
}

.quick-buttons button {
  flex: 1;
  height: 11px;
  border: 1px solid #555;
  color: #ddd;
}

/* floating panel */
.floating {
  position: absolute;
  top: 62px;
  right: 180px;
  width: 120px;
  height: 79px;
  background: #323232;
  border: 1px solid #222;
  font-size: 5px;
}

.floating-top {
  display: flex;
  justify-content: flex-end;
  gap: 5px;
  height: 8px;
  padding: 2px 3px 0 0;
  background: #262626;
}

.floating-tabs {
  display: flex;
  align-items: center;
  justify-content: space-between;
  height: 13px;
  padding-right: 2px;
  background: #282828;
}

.floating-tabs .icon {
  opacity: 0.6;
}

.floating-tabs a {
  padding: 0 6px 0 4px;
  background: #323232;
  color: #e6e6e6;
  font-weight: bold;
  line-height: 13px;
}

.floating h3 {
  margin: 3px 0 3px 2px;
}

.modes,
.finders {
  display: flex;
  align-items: center;
  gap: 6px;
  padding: 0 4px 0 3px;
}

.modes button,
.finders button {
  width: 13px;
  height: 13px;
}

.modes .hover {
  background: #3e3e3e;
}

.finders {
  gap: 7px;
}

.modes .expand {
  width: 35px;
  height: 9px;
}

.tooltip {
  position: absolute;
  top: 114px;
  right: 79px;
  width: 197px;
  padding: 1px 0 1px 2px;
  background: #fff;
  border: 1px solid #888;
  color: #555;
  font-family: Roboto, "Liberation Sans", sans-serif;
  font-size: 6px;
  line-height: 8px;
}

.pointer {
  position: absolute;
  top: 100px;
  right: 271px;
  width: 84px;
  height: 152px;
}
```
